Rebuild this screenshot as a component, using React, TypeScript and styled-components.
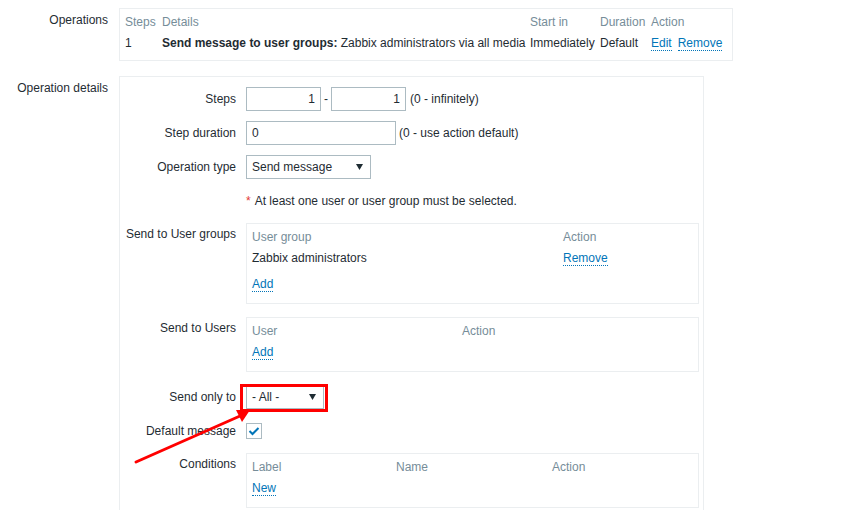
import React from "react";
import styled, { createGlobalStyle } from "styled-components";

const GlobalStyle = createGlobalStyle`
  html, body { margin: 0; padding: 0; overflow: hidden; background: #ffffff; }
  body {
    font-family: "Liberation Sans", Arial, sans-serif;
    font-size: 12px;
    color: #1f2c33;
  }
  * { box-sizing: border-box; }
`;

const Page = styled.div`
  position: relative;
  padding-top: 8px;
  display: flex;
  flex-direction: column;
  gap: 15px;
`;

const FormRow = styled.div`
  display: grid;
  grid-template-columns: 108px auto;
  column-gap: 11px;
  align-items: start;
`;

const TopLabel = styled.div`
  text-align: right;
  line-height: 24px;
`;

const OpsBox = styled.div`
  width: 614px;
  border: 1px solid #ebeef0;
  padding: 3px 5px 6px;
`;

const OpsGrid = styled.div`
  display: grid;
  grid-template-columns: 37px 368px 70px 51px auto;
  line-height: 21px;
  white-space: nowrap;
`;

const HeadCell = styled.div`
  color: #768d99;
`;

const Cell = styled.div``;

const Strong = styled.b`
  font-weight: bold;
`;

const Link = styled.a`
  color: #0275b8;
  text-decoration: none;
  border-bottom: 1px dotted #0275b8;
  cursor: pointer;
  & + & { margin-left: 6px; }
`;

const DetailsBox = styled.div`
  width: 585px;
  border: 1px solid #ebeef0;
  padding: 10px 4px 20px 0;
  display: flex;
  flex-direction: column;
`;

const InnerRow = styled.div<{ $mt?: number }>`
  display: grid;
  grid-template-columns: 116px 1fr;
  column-gap: 10px;
  margin-top: ${(p) => p.$mt ?? 0}px;
  align-items: start;
`;

const FieldLabel = styled.div<{ $lh?: number }>`
  text-align: right;
  line-height: ${(p) => p.$lh ?? 24}px;
  white-space: nowrap;
`;

const Field = styled.div`
  display: flex;
  align-items: center;
  min-height: 24px;
  white-space: nowrap;
`;

const TextInput = styled.input<{ $w: number; $right?: boolean }>`
  width: ${(p) => p.$w}px;
  height: 24px;
  border: 1px solid #acbbc2;
  padding: 0 5px;
  font: inherit;
  color: #1f2c33;
  background: #fff;
  text-align: ${(p) => (p.$right ? "right" : "left")};
  outline: none;
`;

const Dash = styled.span`
  margin: 0 3px;
`;

const Hint = styled.span<{ $ml?: number }>`
  margin-left: ${(p) => p.$ml ?? 4}px;
`;

const SelectWrap = styled.div`
  position: relative;
  display: inline-flex;
`;

const SelectBox = styled.div<{ $w: number }>`
  width: ${(p) => p.$w}px;
  height: 24px;
  border: 1px solid #acbbc2;
  padding: 0 7px 0 5px;
  display: flex;
  align-items: center;
  justify-content: space-between;
  background: #fff;
`;

const Caret = styled.svg`
  width: 7px;
  height: 6px;
  fill: #1f2c33;
`;

const Highlight = styled.div`
  position: absolute;
  left: -6px;
  top: -1px;
  width: 88px;
  height: 28px;
  border: 3px solid #ff0000;
  pointer-events: none;
`;

const Note = styled.div`
  line-height: 24px;
`;

const Req = styled.span`
  color: #e33734;
  margin-right: 4px;
`;

const ListBox = styled.div`
  width: 453px;
  border: 1px solid #ebeef0;
  padding: 3px 5px 8px;
`;

const ListGrid = styled.div<{ $cols: string }>`
  display: grid;
  grid-template-columns: ${(p) => p.$cols};
  line-height: 21px;
  white-space: nowrap;
`;

const AddRow = styled.div<{ $mt?: number }>`
  grid-column: 1 / -1;
  margin-top: ${(p) => p.$mt ?? 0}px;
`;

const CheckBox = styled.div`
  width: 16px;
  height: 16px;
  border: 1px solid #acbbc2;
  display: flex;
  align-items: center;
  justify-content: center;
  background: #fff;
`;

const Annotation = styled.svg`
  position: absolute;
  left: 0;
  top: 0;
  width: 841px;
  height: 510px;
  pointer-events: none;
`;

const SelectField = ({ w, value }: { w: number; value: string }) => (
  <SelectBox $w={w}>
    <span>{value}</span>
    <Caret viewBox="0 0 7 6">
      <polygon points="0,0 7,0 3.5,6" />
    </Caret>
  </SelectBox>
);

export default function App() {
  return (
    <>
      <GlobalStyle />
      <Page>
        <FormRow>
          <TopLabel>Operations</TopLabel>
          <OpsBox>
            <OpsGrid>
              <HeadCell>Steps</HeadCell>
              <HeadCell>Details</HeadCell>
              <HeadCell>Start in</HeadCell>
              <HeadCell>Duration</HeadCell>
              <HeadCell>Action</HeadCell>
              <Cell>1</Cell>
              <Cell>
                <Strong>Send message to user groups:</Strong> Zabbix administrators via all media
              </Cell>
              <Cell>Immediately</Cell>
              <Cell>Default</Cell>
              <Cell>
                <Link>Edit</Link>
                <Link>Remove</Link>
              </Cell>
            </OpsGrid>
          </OpsBox>
        </FormRow>

        <FormRow>
          <TopLabel>Operation details</TopLabel>
          <DetailsBox>
            <InnerRow>
              <FieldLabel>Steps</FieldLabel>
              <Field>
                <TextInput $w={75} $right defaultValue="1" />
                <Dash>-</Dash>
                <TextInput $w={75} $right defaultValue="1" />
                <Hint>(0 - infinitely)</Hint>
              </Field>
            </InnerRow>

            <InnerRow $mt={10}>
              <FieldLabel>Step duration</FieldLabel>
              <Field>
                <TextInput $w={150} defaultValue="0" />
                <Hint $ml={3}>(0 - use action default)</Hint>
              </Field>
            </InnerRow>

            <InnerRow $mt={10}>
              <FieldLabel>Operation type</FieldLabel>
              <Field>
                <SelectField w={125} value="Send message" />
              </Field>
            </InnerRow>

            <InnerRow $mt={10}>
              <FieldLabel />
              <Note>
                <Req>*</Req>At least one user or user group must be selected.
              </Note>
            </InnerRow>

            <InnerRow $mt={10}>
              <FieldLabel $lh={23}>Send to User groups</FieldLabel>
              <ListBox>
                <ListGrid $cols="311px auto">
                  <HeadCell>User group</HeadCell>
                  <HeadCell>Action</HeadCell>
                  <Cell>Zabbix administrators</Cell>
                  <Cell>
                    <Link>Remove</Link>
                  </Cell>
                  <AddRow $mt={5}>
                    <Link>Add</Link>
                  </AddRow>
                </ListGrid>
              </ListBox>
            </InnerRow>

            <InnerRow $mt={13}>
              <FieldLabel $lh={23}>Send to Users</FieldLabel>
              <ListBox>
                <ListGrid $cols="210px auto">
                  <HeadCell>User</HeadCell>
                  <HeadCell>Action</HeadCell>
                  <AddRow>
                    <Link>Add</Link>
                  </AddRow>
                </ListGrid>
              </ListBox>
            </InnerRow>

            <InnerRow $mt={13}>
              <FieldLabel>Send only to</FieldLabel>
              <Field>
                <SelectWrap>
                  <SelectField w={78} value="- All -" />
                  <Highlight />
                </SelectWrap>
              </Field>
            </InnerRow>

            <InnerRow $mt={10}>
              <FieldLabel>Default message</FieldLabel>
              <Field>
                <CheckBox>
                  <svg width="12" height="10" viewBox="0 0 12 10">
                    <polyline
                      points="1.5,5 4.5,8 10.5,2"
                      fill="none"
                      stroke="#0275b8"
                      strokeWidth="2"
                    />
                  </svg>
                </CheckBox>
              </Field>
            </InnerRow>

            <InnerRow $mt={10}>
              <FieldLabel $lh={23}>Conditions</FieldLabel>
              <ListBox>
                <ListGrid $cols="144px 156px auto">
                  <HeadCell>Label</HeadCell>
                  <HeadCell>Name</HeadCell>
                  <HeadCell>Action</HeadCell>
                  <AddRow>
                    <Link>New</Link>
                  </AddRow>
                </ListGrid>
              </ListBox>
            </InnerRow>
          </DetailsBox>
        </FormRow>

        <Annotation viewBox="0 0 841 510">
          <line x1="136" y1="462" x2="240" y2="416" stroke="#ff0000" strokeWidth="3" strokeLinecap="round" />
          <polygon points="250,410 236,410 242,422" fill="#ff0000" />
        </Annotation>
      </Page>
    </>
  );
}
